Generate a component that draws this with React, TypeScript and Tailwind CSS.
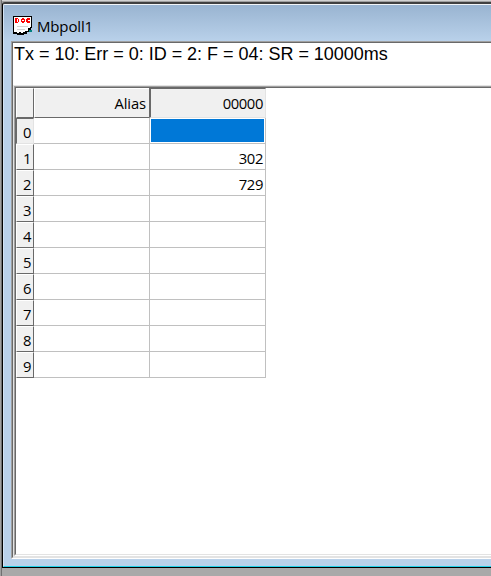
const rows = ['', '302', '729', '', '', '', '', '', '', ''];

function DocIcon() {
  return (
    <svg className="block" width="19" height="19" viewBox="0 0 19 19" shapeRendering="crispEdges">
      <path d="M0 0H19V12H18V15H16V16H14V18H11V19H4V18H0Z" fill="#000" />
      <path d="M1 1H18V11H17V12H15V15H12V16H10V17H8V16H6V17H4V16H1Z" fill="#fff" />
      <path d="M4 10H15V11H4ZM4 13H12V14H4Z" fill="#d4d4d4" />
      <path fillRule="evenodd" d="M2 2H5V3H6V6H5V7H2ZM4 3V6H5V3ZM9 2H11V3H12V6H11V7H9V6H8V3H9ZM9 4V5H11V4ZM14 2H17V4H15V5H17V7H14V6H13V3H14Z" fill="#ff0000" />
      <path d="M16 14H19V16H16Z" fill="#008080" />
    </svg>
  );
}

export default function App() {
  return (
    <div className="flex h-[576px] w-[491px] border-l border-l-[#a0a0a0] bg-[#a9a9a9] font-['Open_Sans','Noto_Sans',sans-serif] text-black">
      <div className="flex min-w-0 flex-1 flex-col overflow-hidden border-l border-l-[#707070]">
        <div className="h-px shrink-0 bg-[#d2d2d2]" />
        <div className="h-px shrink-0 bg-[#a0a0a0]" />
        <div className="flex h-[566px] shrink-0 flex-col rounded-tl-[3px] border-b border-l border-t-2 border-b-black border-l-black border-t-[#404040]">
          <div className="flex min-h-0 flex-1 flex-col rounded-tl-[2px] border-b border-l border-t border-b-[#20d0e8] border-l-[#d3e2f2] border-t-[#f2f5f8] bg-[#b9d1ea]">
            <div className="flex h-[36px] shrink-0 items-start bg-linear-to-b from-[#99b4d1] to-[#b9d1ea] pl-[9px] pt-[11px]">
              <DocIcon />
              <span className="ml-[5px] text-[15px] leading-5 tracking-[-0.15px]">Mbpoll1</span>
            </div>
            <div className="mb-[7px] ml-[7px] flex min-h-0 flex-1 flex-col border-b border-l border-t border-b-white border-l-[#a0a0a0] border-t-[#a0a0a0]">
              <div className="flex min-h-0 flex-1 flex-col border-b border-l border-t border-b-[#e3e3e3] border-l-[#696969] border-t-[#696969] bg-white">
                <div className="h-[42px] shrink-0 whitespace-nowrap pl-px font-['Liberation_Sans',Arial,sans-serif] text-[18px] leading-[22px] tracking-[-0.02px]">
                  Tx = 10: Err = 0: ID = 2: F = 04: SR = 10000ms
                </div>
                <div className="flex min-h-0 flex-1 flex-col border-b border-l border-t border-[#e3e3e3]">
                  <div className="flex min-h-0 flex-1 flex-col border-b border-l border-t border-b-white border-l-[#a0a0a0] border-t-[#a0a0a0]">
                    <div className="min-h-0 flex-1 border-b border-l border-t border-b-[#e3e3e3] border-l-[#696969] border-t-[#696969]">
                      <div className="flex h-[30px] w-[250px] text-[14.8px] leading-[28px] tracking-[-0.4px]">
                        <div className="w-[18px] border-b border-l border-r border-t border-b-[#696969] border-l-white border-r-[#696969] border-t-white bg-[#f0f0f0]" />
                        <div className="w-[115px] border-b border-l border-t border-b-[#696969] border-l-white border-t-white bg-[#f0f0f0] pr-[3px] text-right tracking-[-0.1px]">Alias</div>
                        <div className="w-[117px] border-b border-l-2 border-r border-t border-b-[#e3e3e3] border-l-[#696969] border-r-[#e3e3e3] border-t-[#696969] bg-[#f0f0f0] pr-[2px] text-right">00000</div>
                      </div>
                      {rows.map((value, index) => (
                        <div key={index} className="flex h-[26px] w-[250px] text-[14.8px] leading-[28px] tracking-[-0.4px]">
                          <div className={`w-[18px] border bg-[#f0f0f0] pr-[2px] text-right leading-[27px] ${index === 0 ? 'border-b-[#e3e3e3] border-l-[#696969] border-r-[#e3e3e3] border-t-[#696969]' : 'border-b-[#696969] border-l-white border-r-[#696969] border-t-white'}`}>{index}</div>
                          <div className="w-[116px] border-b border-r border-[#c0c0c0]" />
                          <div className="w-[116px] border-b border-r border-[#c0c0c0] pr-[2px] text-right">
                            {index === 0 ? <div className="ml-px mt-px h-[23px] w-[113px] bg-[#0078d7]" /> : value}
                          </div>
                        </div>
                      ))}
                    </div>
                  </div>
                </div>
              </div>
            </div>
          </div>
        </div>
      </div>
    </div>
  );
}
